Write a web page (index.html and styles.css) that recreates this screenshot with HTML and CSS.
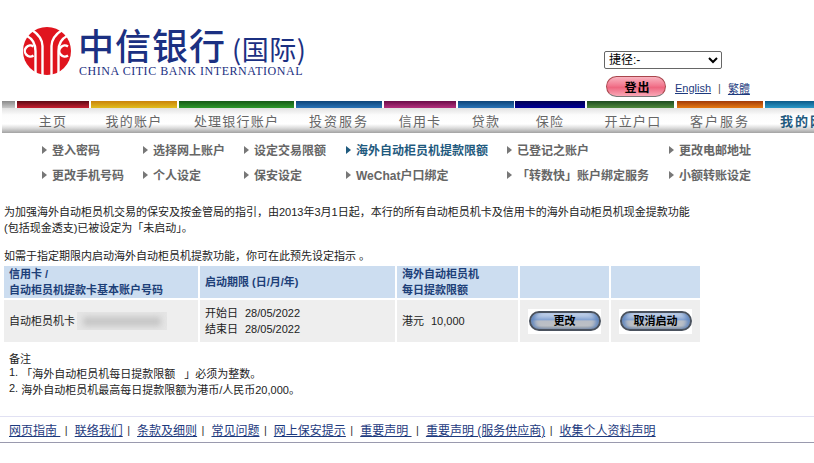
FILE: index.html
```html
<!DOCTYPE html>
<html lang="zh-CN">
<head>
<meta charset="utf-8">
<title>中信银行（国际）</title>
<link rel="stylesheet" href="styles.css">
</head>
<body>
<header class="header">
  <div class="brand">
    <svg class="emblem" viewBox="0 0 48 48" aria-hidden="true">
      <circle cx="24" cy="24" r="24" fill="#e0141e"/>
      <g fill="none" stroke="#fff" stroke-width="2.4">
        <path d="M19.500 48V19C19.500 12 15 7 9 3"/>
        <path d="M28.500 48V19C28.500 12 33 7 39 3"/>
        <path d="M12.500 47V24C12.500 17 10 12 4 9"/>
        <path d="M35.500 47V24C35.500 17 38 12 44 9"/>
        <path d="M10.500 19.500A5.500 5.500 0 1 0 10.500 28.500"/>
        <path d="M45 19.500A5.500 5.500 0 1 0 45 28.500"/>
      </g>
    </svg>
    <div class="wordmark">
      <div class="wordmark-cn">中信银行<span class="wordmark-sub">(国际)</span></div>
      <div class="wordmark-en">CHINA CITIC BANK INTERNATIONAL</div>
    </div>
  </div>
  <div class="tools">
    <select class="shortcut"><option>捷径:-</option></select>
    <div class="tools-row">
      <button class="logout" type="button">登出</button>
      <a class="link lang" href="#">English</a>
      <span class="lang-sep">|</span>
      <a class="link" href="#">繁體</a>
    </div>
  </div>
</header>

<nav class="nav">
  <div class="tab tab-home"><div class="bar"></div></div>
  <div class="tab tab-1"><div class="bar"></div><div class="label">主页</div></div>
  <div class="tab tab-2"><div class="bar"></div><div class="label">我的账户</div></div>
  <div class="tab tab-3"><div class="bar"></div><div class="label">处理银行账户</div></div>
  <div class="tab tab-4"><div class="bar"></div><div class="label wide">投资服务</div></div>
  <div class="tab tab-5"><div class="bar"></div><div class="label">信用卡</div></div>
  <div class="tab tab-6"><div class="bar"></div><div class="label">贷款</div></div>
  <div class="tab tab-7"><div class="bar"></div><div class="label">保险</div></div>
  <div class="tab tab-8"><div class="bar"></div><div class="label shift">开立户口</div></div>
  <div class="tab tab-9"><div class="bar"></div><div class="label wide">客户服务</div></div>
  <div class="tab tab-10"><div class="bar"></div><div class="label current">我的网</div></div>
</nav>

<div class="submenu">
  <a class="sub" href="#">登入密码</a>
  <a class="sub" href="#">选择网上账户</a>
  <a class="sub" href="#">设定交易限额</a>
  <a class="sub active" href="#">海外自动柜员机提款限额</a>
  <a class="sub" href="#">已登记之账户</a>
  <a class="sub" href="#">更改电邮地址</a>
  <a class="sub" href="#">更改手机号码</a>
  <a class="sub" href="#">个人设定</a>
  <a class="sub" href="#">保安设定</a>
  <a class="sub" href="#">WeChat户口绑定</a>
  <a class="sub" href="#">「转数快」账户绑定服务</a>
  <a class="sub" href="#">小额转账设定</a>
</div>

<main class="content">
  <p class="intro">为加强海外自动柜员机交易的保安及按金管局的指引，由2013年3月1日起，本行的所有自动柜员机卡及信用卡的海外自动柜员机现金提款功能<br>(包括现金透支)已被设定为「未启动」。</p>
  <p class="lead">如需于指定期限内启动海外自动柜员机提款功能，你可在此预先设定指示 。</p>
  <table class="limits">
    <thead>
      <tr>
        <th class="col-card">信用卡 /<br>自动柜员机提款卡基本账户号码</th>
        <th class="col-date">启动期限 (日/月/年)</th>
        <th class="col-limit">海外自动柜员机<br>每日提款限额</th>
        <th class="col-act"></th>
        <th class="col-act"></th>
      </tr>
    </thead>
    <tbody>
      <tr>
        <td><div class="card-cell">自动柜员机卡<span class="masked"><span class="masked-ink"></span></span></div></td>
        <td>开始日<span class="date">28/05/2022</span><br>结束日<span class="date">28/05/2022</span></td>
        <td>港元<span class="amount">10,000</span></td>
        <td class="act"><span class="btn-wrap"><button class="pill" type="button">更改</button></span></td>
        <td class="act"><span class="btn-wrap"><button class="pill" type="button">取消启动</button></span></td>
      </tr>
    </tbody>
  </table>
  <div class="notes">
    <div class="note-title">备注</div>
    <div class="note"><span class="num">1.</span>「海外自动柜员机每日提款限额 &nbsp;&nbsp;」必须为整数。</div>
    <div class="note note-2"><span class="num">2.</span>海外自动柜员机最高每日提款限额为港币/人民币20,000。</div>
  </div>
</main>

<footer class="footer">
  <a class="link" href="#">网页指南 </a><span class="sep">|</span>
  <a class="link" href="#">联络我们</a><span class="sep">|</span>
  <a class="link" href="#">条款及细则</a><span class="sep">|</span>
  <a class="link" href="#">常见问题</a><span class="sep">|</span>
  <a class="link" href="#">网上保安提示</a><span class="sep">|</span>
  <a class="link" href="#">重要声明 </a><span class="sep">|</span>
  <a class="link" href="#">重要声明 (服务供应商)</a><span class="sep">|</span>
  <a class="link" href="#">收集个人资料声明</a>
</footer>
</body>
</html>
```
FILE: styles.css
```css
* { box-sizing: border-box; }
html, body { margin: 0; padding: 0; overflow: hidden; }
body {
  width: 814px;
  height: 463px;
  background: #fff;
  color: #222;
  font-family: "Liberation Sans", "Noto Sans CJK SC", sans-serif;
  font-size: 11px;
}
.link { color: #1d3a7e; text-decoration: underline; }

.header { display: flex; height: 101px; }
.brand { display: flex; padding: 27px 0 0 23px; width: 604px; }
.emblem { width: 48px; height: 48px; margin-right: 8px; flex: none; }
.wordmark { width: 240px; margin-top: -1px; }
.wordmark-cn {
  font-family: "Noto Sans CJK SC", sans-serif;
  font-size: 36px;
  line-height: 36px;
  font-weight: 500;
  color: #1b3082;
  letter-spacing: 1px;
  white-space: nowrap;
  margin-left: -1px;
}
.wordmark-sub { font-size: 27px; font-weight: 400; margin-left: 6px; letter-spacing: 0.5px; }
.wordmark-en {
  font-family: "Liberation Serif", serif;
  font-size: 12px;
  line-height: 12px;
  margin-top: -2px;
  color: #1b3082;
  letter-spacing: 0.55px;
  white-space: nowrap;
}
.tools { padding-top: 51px; }
.shortcut {
  display: block;
  width: 118px;
  height: 18px;
  font-family: inherit;
  font-size: 12px;
  background: #fff;
  color: #000;
  border: 1px solid #666;
  border-radius: 2px;
  padding: 0;
}
.tools-row { display: flex; align-items: center; margin: 7px 0 0 2px; font-size: 11px; }
.logout {
  width: 60px;
  height: 21px;
  padding: 0 0 0 3px;
  border: 1px solid #a8454c;
  border-bottom-color: #777;
  border-radius: 11px;
  background: linear-gradient(#f9b4c0 0, #f2788f 45%, #ee6780 55%, #f9a7b6 100%);
  color: #000;
  font-family: inherit;
  font-size: 12px;
  font-weight: 700;
  letter-spacing: 1px;
  margin-right: 9px;
}
.lang-sep { margin: 0 7px 0 7px; color: #555; }
.lang, .lang-sep, .tools-row .link { position: relative; top: 1px; }

.nav {
  display: flex;
  gap: 2px;
  height: 32px;
  padding-left: 2px;
  overflow: hidden;
  background: linear-gradient(#fff 0, #fff 7px, #e2e2e2 7px, #fcfcfc 14px, #fff 23px, #dcdcdc 27px, #a2a2a2 32px);
  background-position: 2px 0;
  background-repeat: no-repeat;
}
.tab { flex: none; }
.bar { height: 7px; }
.label {
  height: 25px;
  line-height: 27px;
  text-align: center;
  font-size: 13px;
  letter-spacing: 1.2px;
  color: #666;
  white-space: nowrap;
}
.label.wide { letter-spacing: 2px; }
.label.shift { padding-left: 5px; }
.label.current { text-align: left; padding-left: 15px; color: #1f5a7e; font-weight: 700; letter-spacing: 2px; }
.tab-home { width: 13px; } .tab-home .bar { background: linear-gradient(#8a8a8a, #c9c9c9); }
.tab-1 { width: 72px; } .tab-1 .bar { background: linear-gradient(#5c0a14, #c81f30); }
.tab-2 { width: 86px; } .tab-2 .bar { background: linear-gradient(#c9830c, #e2bd1e); }
.tab-3 { width: 115px; } .tab-3 .bar { background: linear-gradient(#175a18, #2f9a2c); }
.tab-4 { width: 86px; } .tab-4 .bar { background: linear-gradient(#0e4478, #2a74b8); }
.tab-5 { width: 72px; } .tab-5 .bar { background: linear-gradient(#6a0c48, #b5307e); }
.tab-6 { width: 56px; } .tab-6 .bar { background: linear-gradient(#0e4478, #2a74b8); }
.tab-7 { width: 70px; margin-left: -1px; } .tab-7 .bar { background: linear-gradient(#000050, #000099); }
.tab-8 { width: 87px; } .tab-8 .bar { background: linear-gradient(#1e4a20, #4f8a3c); }
.tab-9 { width: 86px; margin-left: 1px; } .tab-9 .bar { background: linear-gradient(#a03a08, #e87a12); }
.tab-10 { width: 49px; } .tab-10 .bar { background: linear-gradient(#0c5a88, #2a98c8); }

.submenu {
  display: grid;
  grid-template-columns: 101px 101px 102px 161px 162px 130px;
  grid-auto-rows: 25px;
  height: 67px;
  padding: 4px 0 0 42px;
}
.sub {
  display: flex;
  align-items: center;
  font-size: 12px;
  font-weight: 700;
  color: #666;
  text-decoration: none;
  white-space: nowrap;
}
.sub::before {
  content: "";
  flex: none;
  width: 0;
  height: 0;
  margin-right: 5px;
  border-left: 5px solid #777;
  border-top: 4px solid transparent;
  border-bottom: 4px solid transparent;
}
.sub.active { color: #1f5a7e; }
.sub.active::before { border-left-color: #1f5a7e; }

.content { padding: 4px 0 0 4px; height: 216px; }
.intro { margin: 0 0 12px; line-height: 16px; white-space: nowrap; }
.lead { margin: 0; line-height: 16px; white-space: nowrap; }
.limits {
  border-collapse: separate;
  border-spacing: 2px;
  margin-left: -2px;
  width: 700px;
  table-layout: fixed;
}
.limits th {
  background: #ccddf0;
  color: #1d3f78;
  font-weight: 700;
  text-align: left;
  font-size: 11px;
  line-height: 16px;
  height: 32px;
  padding: 0 5px;
}
.limits td {
  background: #eeeeee;
  height: 42px;
  padding: 0 5px;
  line-height: 16px;
}
.col-card { width: 194px; }
.col-date { width: 195px; }
.col-limit { width: 121px; }
.col-act { width: 89px; }
.card-cell { display: flex; align-items: center; }
.masked {
  width: 90px;
  height: 18px;
  margin-left: 2px;
  background: #e5e5e5;
  display: flex;
  align-items: center;
  justify-content: center;
  overflow: hidden;
}
.masked-ink { width: 78px; height: 9px; background: #c4c4c4; filter: blur(3px); }
.date, .amount { margin-left: 7px; }
.limits td.act { padding: 0; text-align: center; }
.btn-wrap {
  display: inline-flex;
  align-items: center;
  justify-content: center;
  width: 73px;
  height: 25px;
  background: #fff;
  vertical-align: middle;
}
.pill {
  width: 72px;
  height: 20px;
  padding: 0;
  border: 2px solid #4a525e;
  border-radius: 10px;
  background: linear-gradient(#d6e0f0 0, #86a4d2 42%, #b9bec6 50%, #bcc0c6 80%, #8f97a4 100%);
  box-shadow: inset 5px 0 4px -2px #5f85bd, inset -5px 0 4px -2px #5f85bd;
  color: #000;
  font-family: inherit;
  font-size: 11px;
  font-weight: 700;
  line-height: 14px;
}
.notes { padding: 7px 0 0 5px; }
.note-title { line-height: 16px; }
.note { line-height: 14px; white-space: nowrap; }
.note-2 { margin-top: 2px; }
.num { position: relative; top: -2px; margin-right: 3px; }

.footer {
  display: flex;
  align-items: center;
  height: 27px;
  padding-left: 9px;
  border-top: 1px solid #e1e1f3;
  border-bottom: 1px solid #9a9aae;
  font-size: 12px;
  white-space: pre;
}
.sep { margin: 0 7px 0 4.500px; color: #333; font-size: 11px; }
```
